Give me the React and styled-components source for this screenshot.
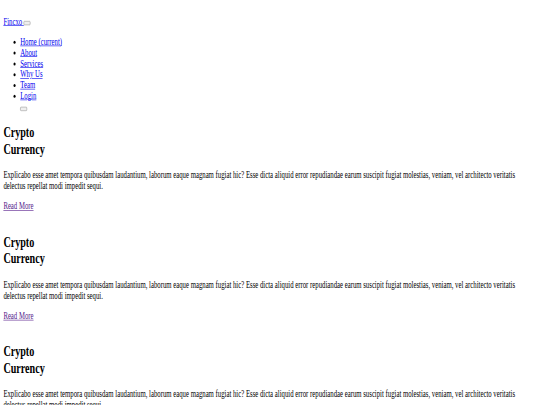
import React from "react";
import styled, { createGlobalStyle } from "styled-components";

const Global = createGlobalStyle`
  html, body { margin: 0; padding: 0; background: #ffffff; }
  body { overflow: hidden; font-family: "Liberation Serif", "Times New Roman", serif; }
`;

const Viewport = styled.div`
  width: 540px;
  height: 405px;
  overflow: hidden;
`;

const Canvas = styled.div`
  width: 1280px;
  box-sizing: border-box;
  padding: 8px;
  transform: scale(0.421875, 0.6);
  transform-origin: 0 0;
  font-family: "Liberation Serif", "Times New Roman", serif;
  font-size: 16px;
  line-height: normal;
  color: #000000;
`;

const Nav = styled.nav`
  padding-top: 19.4px;
`;

const Link = styled.a`
  color: ${(p) => (p.$visited ? "#551a8b" : "#0000ee")};
  text-decoration: underline;
  cursor: pointer;
`;

const TinyButton = styled.button`
  display: inline-block;
  box-sizing: border-box;
  width: 16px;
  height: 7px;
  padding: 0;
  margin: 0;
  border: 1px solid #8f8f8f;
  border-radius: 2px;
  background: #efefef;
  vertical-align: baseline;
`;

const Menu = styled.ul`
  margin: 16px 0;
  padding-left: 40px;
  list-style: disc;
`;

const MenuItem = styled.li`
  line-height: normal;
`;

const ActionItem = styled.li`
  list-style: none;
  padding-top: 1px;
`;

const Slide = styled.section`
  padding-bottom: 18px;
`;

const Title = styled.h2`
  margin: 19.92px 0 20.7px;
  font-size: 24px;
  font-weight: bold;
`;

const Text = styled.p`
  margin: 16px 0;
`;

const navItems = ["Home (current)", "About", "Services", "Why Us", "Team", "Login"];

const body =
  "Explicabo esse amet tempora quibusdam laudantium, laborum eaque magnam fugiat hic? Esse dicta aliquid error repudiandae earum suscipit fugiat molestias, veniam, vel architecto veritatis delectus repellat modi impedit sequi.";

export default function App() {
  return (
    <Viewport>
      <Global />
      <Canvas>
        <Nav>
          <Link href="#">Fincxo </Link>
          <TinyButton aria-label="Toggle navigation" />
          <Menu>
            {navItems.map((item) => (
              <MenuItem key={item}>
                <Link href="#">{item}</Link>
              </MenuItem>
            ))}
            <ActionItem>
              <TinyButton aria-label="Search" />
            </ActionItem>
          </Menu>
        </Nav>
        {[0, 1, 2].map((i) => (
          <Slide key={i}>
            <Title>
              Crypto
              <br />
              Currency
            </Title>
            <Text>{body}</Text>
            <Link href="#" $visited>
              Read More
            </Link>
          </Slide>
        ))}
      </Canvas>
    </Viewport>
  );
}
